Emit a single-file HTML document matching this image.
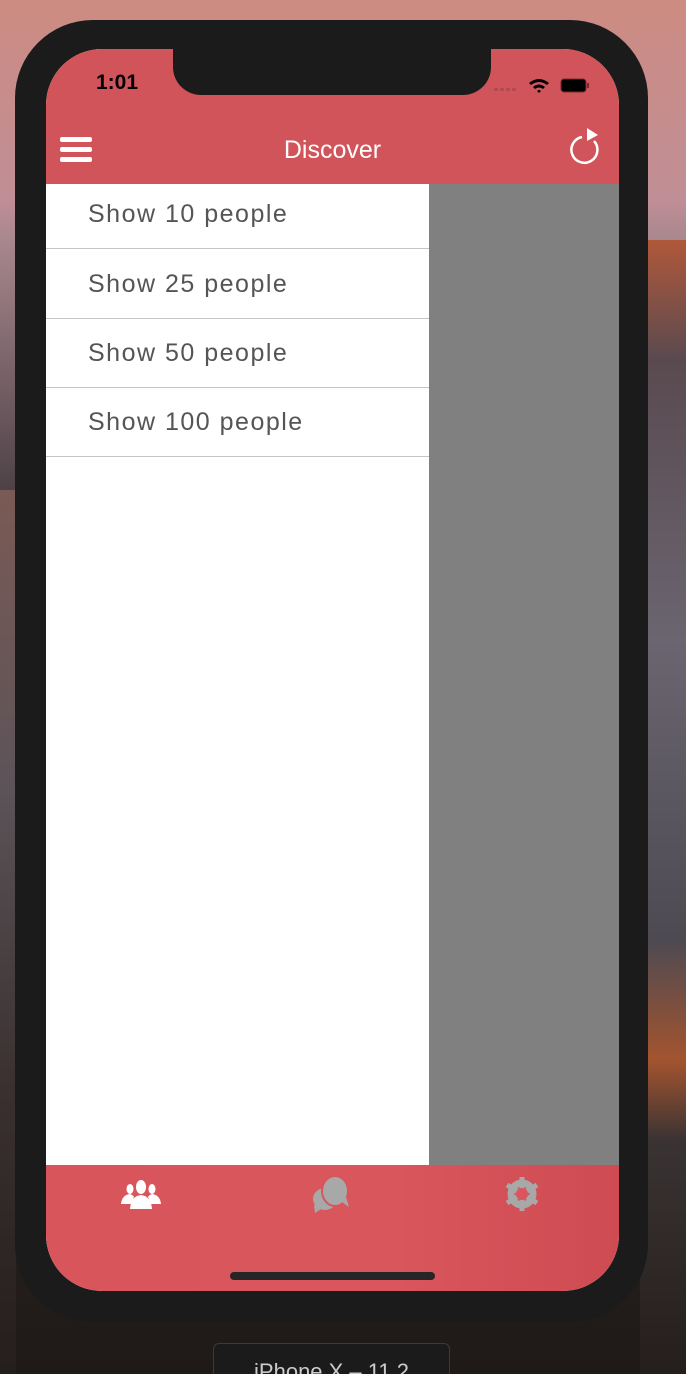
<!DOCTYPE html>
<html style="width:686px;height:1374px;overflow:hidden"><head><style>
body{margin:0;width:686px;height:1374px;overflow:hidden;position:relative;font-family:"Liberation Sans",sans-serif;
background:linear-gradient(180deg,#cd8c82 0px,#c08e96 200px,#a8878e 240px,#4a3f44 500px,#3b3438 800px,#2a2220 1050px,#1f1a18 1374px);}
.rock{position:absolute;left:640px;top:240px;width:46px;height:1134px;background:linear-gradient(180deg,#b0583a 0,#5a4a50 120px,#6a6570 400px,#4d4a52 700px,#a3542f 820px,#3a3333 900px,#241e1c 1134px);}
.lrock{position:absolute;left:0;top:490px;width:16px;height:884px;background:linear-gradient(180deg,#7a5a55,#5c5358 300px,#3a3030 600px,#241e1c);}
.phone{position:absolute;left:15px;top:20px;width:633px;height:1302px;background:#1b1b1b;border-radius:78px;}
.screen{position:absolute;left:46px;top:49px;width:573px;height:1242px;border-radius:56px;overflow:hidden;background:#fff;}
.nav{position:absolute;left:0;top:0;width:573px;height:135px;background:#d0545a;}
.notch{position:absolute;left:127px;top:-2px;width:318px;height:48px;background:#1b1b1b;border-radius:0 0 28px 28px;}
.time{position:absolute;left:50px;top:22px;font-size:21px;font-weight:bold;color:#000;}
.title{position:absolute;left:0;width:573px;top:87px;text-align:center;color:#fff;font-size:25px;}
.gray{position:absolute;left:383px;top:135px;width:190px;height:981px;background:#808080;}
.row{position:absolute;left:0;width:383px;border-bottom:1px solid #c4c4c4;color:#555;font-size:25px;letter-spacing:1.5px;box-sizing:border-box;padding-left:42px;}
.tab{position:absolute;left:0;top:1116px;width:573px;height:126px;background:linear-gradient(90deg,#d9555c 0,#d8565c 60%,#cf4b53 100%);}
.home{position:absolute;left:184px;top:107px;width:205px;height:8px;border-radius:4px;background:#262626;}
.label{position:absolute;left:213px;top:1343px;width:235px;height:31px;overflow:hidden;background:#1b1b1b;border:1px solid #3a3a3a;border-bottom:none;border-radius:6px 6px 0 0;color:#ccc;font-size:22px;text-align:center;line-height:56px;}
</style></head><body>
<div class="rock"></div><div class="lrock"></div>
<div class="phone"></div>
<div class="screen">
 <div class="nav">
  <div class="notch"></div>
  <div class="time">1:01</div>
  <svg style="position:absolute;left:448px;top:28px" width="130" height="18">
   <g fill="#b44a50"><rect x="0" y="11" width="4" height="3"/><rect x="6" y="11" width="4" height="3"/><rect x="12" y="11" width="4" height="3"/><rect x="18" y="11" width="4" height="3"/></g>
   <path d="M35 6 Q45 -2 55 6 L53 8 Q45 2 37 8Z M39 10 Q45 5 51 10 L49 12 Q45 9 41 12Z M43 14 L45 16 L47 14 Q45 12 43 14Z" fill="#000"/>
   <rect x="67" y="2" width="25" height="13" rx="3" fill="#000" stroke="#7a2a2e" stroke-width="1"/>
   <rect x="93" y="6" width="2" height="5" fill="#7a2a2e"/>
  </svg>
  <svg style="position:absolute;left:14px;top:88px" width="32" height="26"><rect x="0" y="0" width="32" height="5" rx="2" fill="#fff"/><rect x="0" y="10" width="32" height="5" rx="2" fill="#fff"/><rect x="0" y="20" width="32" height="5" rx="2" fill="#fff"/></svg>
  <div class="title">Discover</div>
  <svg style="position:absolute;left:524px;top:76px" width="36" height="40"><path d="M24 16 A13 13 0 1 1 12 12" fill="none" stroke="#fff" stroke-width="2.5"/><path d="M17 3 L28 10 L17 16Z" fill="#fff"/></svg>
 </div>
 <div class="gray"></div>
 <div class="row" style="top:135px;height:65px;line-height:60px">Show 10 people</div>
 <div class="row" style="top:200px;height:70px;line-height:70px">Show 25 people</div>
 <div class="row" style="top:270px;height:69px;line-height:68px">Show 50 people</div>
 <div class="row" style="top:339px;height:69px;line-height:68px">Show 100 people</div>
 <div class="tab">
  <svg style="position:absolute;left:74px;top:14px" width="42" height="30" fill="#fff">
   <ellipse cx="21" cy="8" rx="5" ry="7"/><path d="M10 30 Q11 17 21 16 Q31 17 32 30Z"/>
   <ellipse cx="10" cy="10" rx="3.5" ry="5"/><path d="M1 25 Q2 16 10 15 Q13 16 14 18 L11 25Z"/>
   <ellipse cx="32" cy="10" rx="3.5" ry="5"/><path d="M41 25 Q40 16 32 15 Q29 16 28 18 L31 25Z"/>
  </svg>
  <svg style="position:absolute;left:266px;top:10px" width="40" height="40" fill="#a8a8a8">
   <ellipse cx="13" cy="24" rx="12" ry="11"/><path d="M2 30 L3 38 L12 32Z"/>
   <ellipse cx="23" cy="16" rx="13" ry="15" stroke="#d9555c" stroke-width="2"/><path d="M30 27 L37 32 L34 22Z"/>
  </svg>
  <svg style="position:absolute;left:458px;top:10px" width="36" height="38"><circle cx="18" cy="19" r="11" fill="none" stroke="#a8a8a8" stroke-width="7"/><g stroke="#a8a8a8" stroke-width="5"><line x1="18" y1="2" x2="18" y2="36"/><line x1="3" y1="10" x2="33" y2="28"/><line x1="3" y1="28" x2="33" y2="10"/></g><circle cx="18" cy="19" r="6" fill="#d8565c"/></svg>
  <div class="home"></div>
 </div>
</div>
<div class="label">iPhone X – 11.2</div>
</body></html>
